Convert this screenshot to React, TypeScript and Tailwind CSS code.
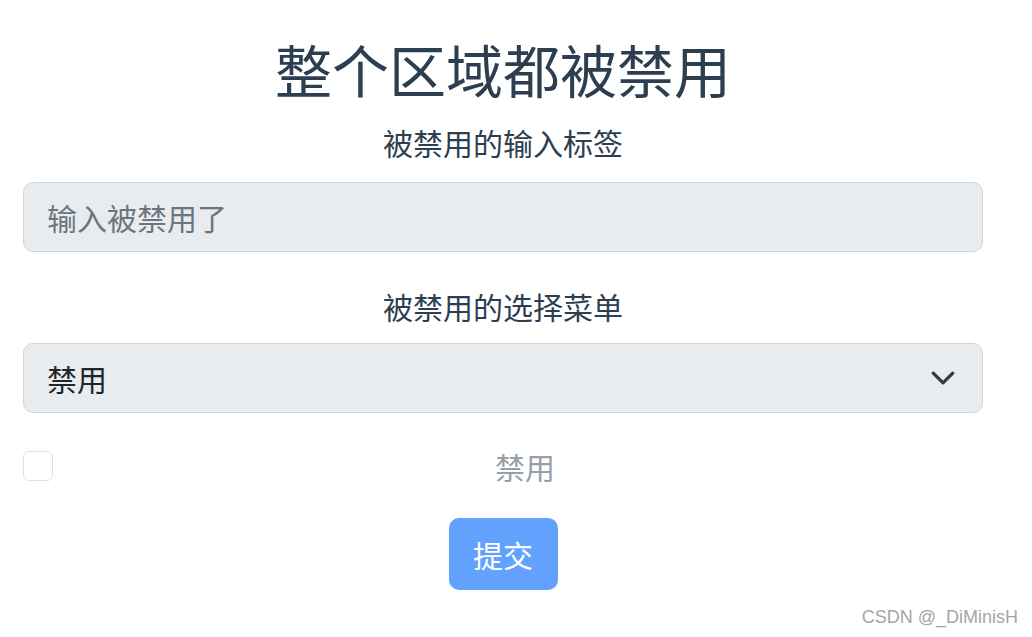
import React from "react";

export default function App() {
  return (
    <div
      className="relative w-[1032px] h-[637px] bg-white text-center text-[#2c3e50] overflow-hidden"
      style={{ fontFamily: '"Noto Sans CJK SC", "Noto Sans", sans-serif' }}
    >
      <fieldset disabled className="pl-[23px] pr-[49px] pt-[34px]">
        <h1 className="text-[57px] leading-[68px] font-normal m-0">整个区域都被禁用</h1>
        <label className="block mt-[18px] text-[30px] leading-[45px]">被禁用的输入标签</label>
        <div className="mt-[17px] h-[70px] w-full rounded-[10px] border border-[#ced4da] bg-[#e9ecef] flex items-center px-[23px] text-[30px] text-[#6c757d] text-left">
          输入被禁用了
        </div>
        <label className="block mt-[32px] text-[30px] leading-[45px]">被禁用的选择菜单</label>
        <div className="mt-[14px] h-[70px] w-full rounded-[10px] border border-[#ced4da] bg-[#e9ecef] flex items-center justify-between pl-[23px] pr-[26px] text-[30px] text-[#212529]">
          <span>禁用</span>
          <svg width="26" height="26" viewBox="0 0 16 16" fill="none">
            <path d="m2 5 6 6 6-6" stroke="#343a40" strokeWidth="2" strokeLinecap="round" strokeLinejoin="round" />
          </svg>
        </div>
        <div className="mt-[38px] flex items-center h-[30px]">
          <div className="w-[30px] h-[30px] rounded-[6px] border border-[#dfe1e4] bg-white shrink-0" />
          <div className="flex-1 pl-[14px] text-[30px] leading-[30px] text-[#969ea8]">禁用</div>
        </div>
        <div className="mt-[37px] flex justify-center">
          <div className="w-[109px] h-[72px] rounded-[10px] bg-[#62a2fe] text-white text-[30px] flex items-center justify-center">
            提交
          </div>
        </div>
      </fieldset>
      <div
        className="absolute right-[14px] bottom-[6px] text-[18px] text-[#a6a6a6]"
        style={{ fontFamily: '"Liberation Sans", Arial, sans-serif' }}
      >
        CSDN @_DiMinisH
      </div>
    </div>
  );
}
